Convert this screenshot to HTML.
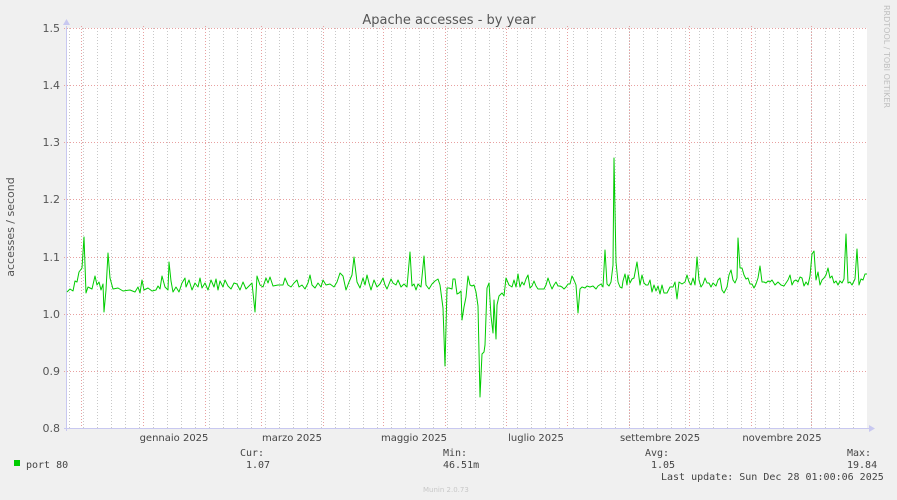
<!DOCTYPE html>
<html><head><meta charset="utf-8"><style>
html,body{margin:0;padding:0;background:#f0f0f0;}
svg{display:block}
</style></head><body>
<svg width="897" height="500" xmlns="http://www.w3.org/2000/svg" font-family="DejaVu Sans, Liberation Sans, sans-serif">
<rect width="897" height="500" fill="#f0f0f0"/>
<rect x="67" y="28" width="800" height="400" fill="#ffffff"/>
<g stroke="#c8c8c8" stroke-width="1" stroke-dasharray="1,2">
<path d="M69.5 28V428M83.5 28V428M97.5 28V428M111.5 28V428M125.5 28V428M139.5 28V428M153.5 28V428M167.5 28V428M181.5 28V428M195.5 28V428M209.5 28V428M223.5 28V428M237.5 28V428M251.5 28V428M265.5 28V428M279.5 28V428M293.5 28V428M307.5 28V428M321.5 28V428M335.5 28V428M349.5 28V428M363.5 28V428M377.5 28V428M391.5 28V428M405.5 28V428M419.5 28V428M433.5 28V428M447.5 28V428M461.5 28V428M475.5 28V428M489.5 28V428M503.5 28V428M517.5 28V428M531.5 28V428M545.5 28V428M559.5 28V428M573.5 28V428M587.5 28V428M601.5 28V428M615.5 28V428M629.5 28V428M643.5 28V428M657.5 28V428M671.5 28V428M685.5 28V428M699.5 28V428M713.5 28V428M727.5 28V428M741.5 28V428M755.5 28V428M769.5 28V428M783.5 28V428M797.5 28V428M811.5 28V428M825.5 28V428M839.5 28V428M853.5 28V428"/>
</g>
<g stroke="#e8a0a0" stroke-width="1" stroke-dasharray="1,2">
<path d="M81.5 26V431M143.5 26V431M205.5 26V431M261.5 26V431M323.5 26V431M383.5 26V431M445.5 26V431M506.5 26V431M567.5 26V431M629.5 26V431M689.5 26V431M751.5 26V431M811.5 26V431"/>
<path d="M64 28.5H867M64 85.5H867M64 142.5H867M64 199.5H867M64 257.5H867M64 314.5H867M64 371.5H867"/>
</g>
<path d="M66.5 26V431M64 428.5H870" stroke="#c8c8f0" stroke-width="1"/>
<path d="M63 25L66.5 19L70 25Z" fill="#c8c8f0"/>
<path d="M869 425L875 428.5L869 432Z" fill="#c8c8f0"/>
<polyline fill="none" stroke="#00cc00" stroke-width="1" stroke-linejoin="round" points="67,292 70,289 73,291 75,281 77,282 79,272 82,268 84,237 86,293 88,287 92,289 95,276 97,285 99,282 101,290 103,284 104,312 106,290 108,253 110,278 113,289 118,288 123,291 130,290 135,292 138,287 140,293 142,280 144,290 148,288 152,291 156,290 158,286 160,289 162,276 165,287 168,290 169,262 171,281 173,292 176,287 179,292 182,283 185,278 186,287 189,280 192,290 195,283 198,287 200,278 202,288 205,283 208,290 211,280 214,287 216,279 218,290 220,281 223,287 225,280 228,286 231,289 234,283 237,284 240,290 243,282 246,289 249,286 252,283 255,312 257,276 260,285 263,287 266,278 268,283 270,277 273,286 278,285 283,285 285,278 288,285 291,287 294,283 297,280 299,287 302,285 305,289 308,283 310,275 312,285 315,288 318,283 321,287 323,280 326,285 330,284 334,287 337,282 340,273 343,276 346,290 349,282 352,275 354,257 357,282 360,288 363,278 365,285 367,275 369,283 371,290 374,280 377,287 380,284 383,278 385,285 387,289 389,284 391,279 393,283 396,285 398,280 401,287 404,284 407,287 410,252 412,286 414,284 416,290 418,284 421,287 424,256 426,285 429,289 432,284 435,281 438,279 440,285 443,308 445,366 447,288 449,288 452,289 453,279 455,279 457,294 459,293 461,291 462,320 464,307 466,297 468,276 470,285 472,286 474,285 476,292 478,306 480,397 482,354 484,352 485,345 487,288 489,283 491,316 493,333 494,300 496,339 497,305 499,296 502,293 504,296 506,278 509,285 512,287 514,280 516,287 518,274 520,287 522,282 524,285 526,279 528,275 530,288 532,286 534,281 536,286 538,289 540,289 544,289 546,285 548,278 550,284 552,289 554,285 556,282 558,286 560,286 562,287 564,289 566,287 568,284 570,284 572,276 574,280 576,285 578,313 580,289 582,287 585,288 587,286 590,287 593,286 596,289 598,286 601,284 603,287 605,250 607,284 609,286 611,282 613,265 614,158 616,262 618,282 620,287 622,288 623,281 625,274 627,285 628,275 630,283 632,279 634,278 637,262 640,285 642,275 644,283 646,285 648,285 650,280 652,292 654,285 656,291 658,286 660,294 662,285 664,293 667,293 670,287 673,287 675,282 677,299 679,282 682,284 685,282 687,275 689,282 691,285 693,278 695,285 697,257 699,280 701,287 703,284 705,278 707,283 709,283 711,287 713,283 716,286 718,280 720,278 722,290 724,293 727,287 729,275 731,270 733,280 735,283 737,278 738,238 740,268 742,268 744,275 746,279 748,278 750,284 752,284 754,288 756,284 758,278 760,266 762,282 764,282 766,283 768,281 770,282 772,280 775,285 778,282 781,285 784,286 786,283 788,280 790,275 792,285 794,281 796,280 798,282 800,277 802,278 804,286 806,282 808,285 810,276 812,254 814,251 816,280 818,272 820,285 822,280 824,278 826,275 828,268 830,278 832,276 834,283 836,281 838,285 840,281 842,283 844,279 846,234 848,283 850,282 852,285 855,279 857,249 859,285 861,279 863,280 865,274 867,274"/>
<text x="449" y="24" text-anchor="middle" font-size="13" fill="#555">Apache accesses - by year</text>
<g font-size="11" fill="#555" text-anchor="end">
<text x="60" y="32">1.5</text><text x="60" y="89">1.4</text><text x="60" y="146">1.3</text><text x="60" y="203">1.2</text><text x="60" y="261">1.1</text><text x="60" y="318">1.0</text><text x="60" y="375">0.9</text><text x="60" y="432">0.8</text>
</g>
<text transform="translate(14,227) rotate(-90)" text-anchor="middle" font-size="11" fill="#555">accesses / second</text>
<text transform="translate(884,5) rotate(90)" font-size="8" fill="#c0c0c0">RRDTOOL / TOBI OETIKER</text>
<g font-size="10" fill="#444" text-anchor="middle">
<text x="174" y="441">gennaio 2025</text><text x="292" y="441">marzo 2025</text><text x="414" y="441">maggio 2025</text><text x="536" y="441">luglio 2025</text><text x="660" y="441">settembre 2025</text><text x="782" y="441">novembre 2025</text>
</g>
<rect x="14" y="460" width="6" height="6" fill="#00cc00"/>
<g font-family="DejaVu Sans Mono, Liberation Mono, monospace" font-size="10" fill="#444">
<text x="26" y="468">port 80</text>
<text x="240" y="456">Cur:</text><text x="246" y="468">1.07</text>
<text x="443" y="456">Min:</text><text x="443" y="468">46.51m</text>
<text x="645" y="456">Avg:</text><text x="651" y="468">1.05</text>
<text x="847" y="456">Max:</text><text x="847" y="468">19.84</text>
<text x="661" y="480">Last update: Sun Dec 28 01:00:06 2025</text>
</g>
<text x="423" y="492" font-size="7" fill="#c8c8c8">Munin 2.0.73</text>
</svg>
</body></html>
